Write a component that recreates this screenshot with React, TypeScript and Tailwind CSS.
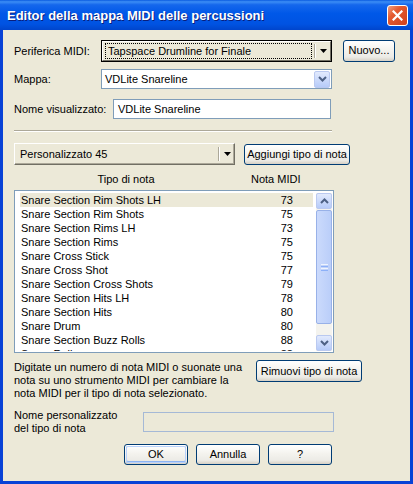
import React from 'react'

const rows: [string, number][] = [
  ['Snare Section Rim Shots LH', 73],
  ['Snare Section Rim Shots', 75],
  ['Snare Section Rims LH', 73],
  ['Snare Section Rims', 75],
  ['Snare Cross Stick', 75],
  ['Snare Cross Shot', 77],
  ['Snare Section Cross Shots', 79],
  ['Snare Section Hits LH', 78],
  ['Snare Section Hits', 80],
  ['Snare Drum', 80],
  ['Snare Section Buzz Rolls', 88],
  ['Snare Roll', 88],
]

function Triangle() {
  return (
    <svg width="7" height="4" viewBox="0 0 7 4">
      <polygon points="0,0 7,0 3.5,4" fill="#000" />
    </svg>
  )
}

function Chevron({ up }: { up?: boolean }) {
  return (
    <svg width="9" height="6" viewBox="0 0 9 6">
      <path
        d={up ? 'M1 5 L4.5 1.5 L8 5' : 'M1 1 L4.5 4.5 L8 1'}
        stroke="#4D6185"
        strokeWidth="2"
        fill="none"
      />
    </svg>
  )
}

function XpButton({
  children,
  w,
  h = 'h-[22px]',
  def,
  className = '',
}: {
  children: React.ReactNode
  w: string
  h?: string
  def?: boolean
  className?: string
}) {
  return (
    <div
      className={`${w} ${h} ${className} shrink-0 rounded-[3px] border border-[#003C74] bg-[linear-gradient(to_bottom,#FFFFFF_0%,#F4F3EE_45%,#ECEBE6_80%,#D6D0C5_100%)] p-px`}
    >
      <div
        className={`flex h-full w-full items-center justify-center rounded-[2px] ${
          def ? 'shadow-[inset_0_0_0_1px_#B9D1FA,inset_0_-1px_0_1px_#8CB4F2]' : ''
        }`}
      >
        {children}
      </div>
    </div>
  )
}

function XpCombo({ text, w }: { text: string; w: string }) {
  return (
    <div className={`${w} flex h-[20px] shrink-0 items-center border border-[#7F9DB9] bg-white`}>
      <span className="flex-1 pl-[3px]">{text}</span>
      <div className="mr-px flex h-[17px] w-[16px] items-center justify-center rounded-[2px] border border-[#BAC9F0] bg-[linear-gradient(to_bottom,#E2EAFD,#B6CBF9)]">
        <Chevron />
      </div>
    </div>
  )
}

export default function App() {
  return (
    <div className="flex h-[484px] w-[413px] flex-col overflow-hidden font-['Liberation_Sans',Arial,sans-serif] text-[11px] leading-[13px] text-black">
      {/* title bar */}
      <div className="flex h-[30px] shrink-0 items-center justify-between bg-[linear-gradient(to_bottom,#0A5BE0_0%,#3C8DF5_6%,#1567EC_16%,#0058E8_45%,#0053E2_80%,#0045CC_100%)] pl-[7px] pr-[5px]">
        <span className="text-[13px] font-bold text-white [text-shadow:1px_1px_0_#0A1E7A]">
          Editor della mappa MIDI delle percussioni
        </span>
        <div className="flex h-[21px] w-[21px] items-center justify-center rounded-[3px] border border-white bg-[linear-gradient(135deg,#F0A080_0%,#E45A30_35%,#D0401C_100%)]">
          <svg width="11" height="11" viewBox="0 0 11 11">
            <path d="M1.5 1.5 L9.5 9.5 M9.5 1.5 L1.5 9.5" stroke="#fff" strokeWidth="2.2" strokeLinecap="square" />
          </svg>
        </div>
      </div>

      {/* client */}
      <div className="flex flex-1 flex-col border-x-[3px] border-b-[3px] border-[#0842D6] bg-[#ECE9D8] pl-[11px]">
        {/* Periferica MIDI */}
        <div className="mt-[10px] flex h-[22px] items-center">
          <span className="w-[87px] shrink-0">Periferica MIDI:</span>
          <div className="h-[22px] w-[231px] shrink-0 border border-black">
            <div className="flex h-full w-full items-center border border-b-[#716F64] border-l-white border-r-[#716F64] border-t-white bg-[#ECE9D8] pl-[2px] pr-[2px]">
              <div className="flex h-[16px] flex-1 items-center border border-dotted border-black pl-[2px]">
                Tapspace Drumline for Finale
              </div>
              <div className="mx-[2px] h-[14px] w-[2px] border-l border-r border-l-[#ACA899] border-r-white" />
              <div className="flex w-[10px] items-center justify-center">
                <Triangle />
              </div>
            </div>
          </div>
          <XpButton w="w-[52px]" h="h-[22px]" className="ml-[11px] -mt-[1px]">
            Nuovo...
          </XpButton>
        </div>

        {/* Mappa */}
        <div className="mt-[7px] flex h-[20px] items-center">
          <span className="w-[87px] shrink-0">Mappa:</span>
          <XpCombo text="VDLite Snareline" w="w-[231px]" />
        </div>

        {/* Nome visualizzato */}
        <div className="mt-[10px] flex h-[20px] items-center">
          <span className="w-[99px] shrink-0">Nome visualizzato:</span>
          <div className="flex h-[20px] w-[218px] items-center border border-[#7F9DB9] bg-white pl-[4px]">
            VDLite Snareline
          </div>
        </div>

        {/* separator */}
        <div className="mt-[11px] h-[2px] w-[318px] border-b border-t border-b-white border-t-[#ACA899]" />

        {/* Personalizzato */}
        <div className="mt-[11px] flex h-[22px] items-center">
          <div className="flex h-[22px] w-[221px] shrink-0 items-center border border-b-[#716F64] border-l-white border-r-[#716F64] border-t-white bg-[#ECE9D8] pl-[5px] shadow-[inset_-1px_-1px_0_#ACA899]">
            <span className="flex-1">Personalizzato 45</span>
            <div className="h-[14px] w-[2px] border-l border-r border-l-[#ACA899] border-r-white" />
            <div className="flex w-[14px] items-center justify-center">
              <Triangle />
            </div>
          </div>
          <XpButton w="w-[106px]" h="h-[21px]" className="ml-[9px] mt-[1px]">
            Aggiungi tipo di nota
          </XpButton>
        </div>

        {/* headers */}
        <div className="mt-[7px] flex h-[14px] items-center">
          <span className="w-[224px] text-center">Tipo di nota</span>
          <span className="ml-[13px]">Nota MIDI</span>
        </div>

        {/* list */}
        <div className="mt-[4px] flex h-[163px] w-[320px] border border-[#7F9DB9] bg-white pb-px pl-[5px] pr-px pt-[2px]">
          <div className="flex w-[293px] flex-col overflow-hidden">
            {rows.map(([name, n], i) => (
              <div
                key={name}
                className={`flex h-[14px] shrink-0 items-center pl-px pr-[20px] ${i === 0 ? 'bg-[#ECE9D8]' : ''}`}
              >
                <span className="flex-1">{name}</span>
                <span>{n}</span>
              </div>
            ))}
          </div>
          {/* scrollbar */}
          <div className="ml-[3px] flex w-[16px] flex-col bg-[#F4F3EE]">
            <div className="flex h-[16px] items-center justify-center rounded-[2px] border border-[#BAC9F0] bg-[linear-gradient(to_bottom,#E2EAFD,#B6CBF9)]">
              <Chevron up />
            </div>
            <div className="mt-px flex h-[114px] flex-col items-center justify-center gap-px rounded-[2px] border border-[#98B1E8] bg-[linear-gradient(to_right,#CBDAFC,#BACEF9)]">
              <div className="h-px w-[7px] bg-[#EEF4FE]" />
              <div className="h-px w-[7px] bg-[#8CB0F8]" />
              <div className="h-px w-[7px] bg-[#EEF4FE]" />
              <div className="h-px w-[7px] bg-[#8CB0F8]" />
            </div>
            <div className="flex-1" />
            <div className="flex h-[16px] items-center justify-center rounded-[2px] border border-[#BAC9F0] bg-[linear-gradient(to_bottom,#E2EAFD,#B6CBF9)]">
              <Chevron />
            </div>
          </div>
        </div>

        {/* description */}
        <div className="mt-[7px] flex">
          <p className="w-[242px] shrink-0 pt-px">
            Digitate un numero di nota MIDI o suonate una
            <br />
            nota su uno strumento MIDI per cambiare la
            <br />
            nota MIDI per il tipo di nota selezionato.
          </p>
          <XpButton w="w-[106px]" h="h-[22px]">
            Rimuovi tipo di nota
          </XpButton>
        </div>

        {/* nome personalizzato */}
        <div className="mt-[9px] flex">
          <p className="w-[129px] shrink-0">
            Nome personalizzato
            <br />
            del tipo di nota
          </p>
          <div className="mt-[3px] h-[20px] w-[191px] border border-[#A5B9D6] bg-[#ECE9D8]" />
        </div>

        {/* buttons */}
        <div className="mt-[9px] flex">
          <XpButton w="w-[64px]" h="h-[21px]" def className="ml-[110px]">
            OK
          </XpButton>
          <XpButton w="w-[64px]" h="h-[21px]" className="ml-[8px]">
            Annulla
          </XpButton>
          <XpButton w="w-[64px]" h="h-[21px]" className="ml-[8px]">
            ?
          </XpButton>
        </div>
      </div>
    </div>
  )
}
